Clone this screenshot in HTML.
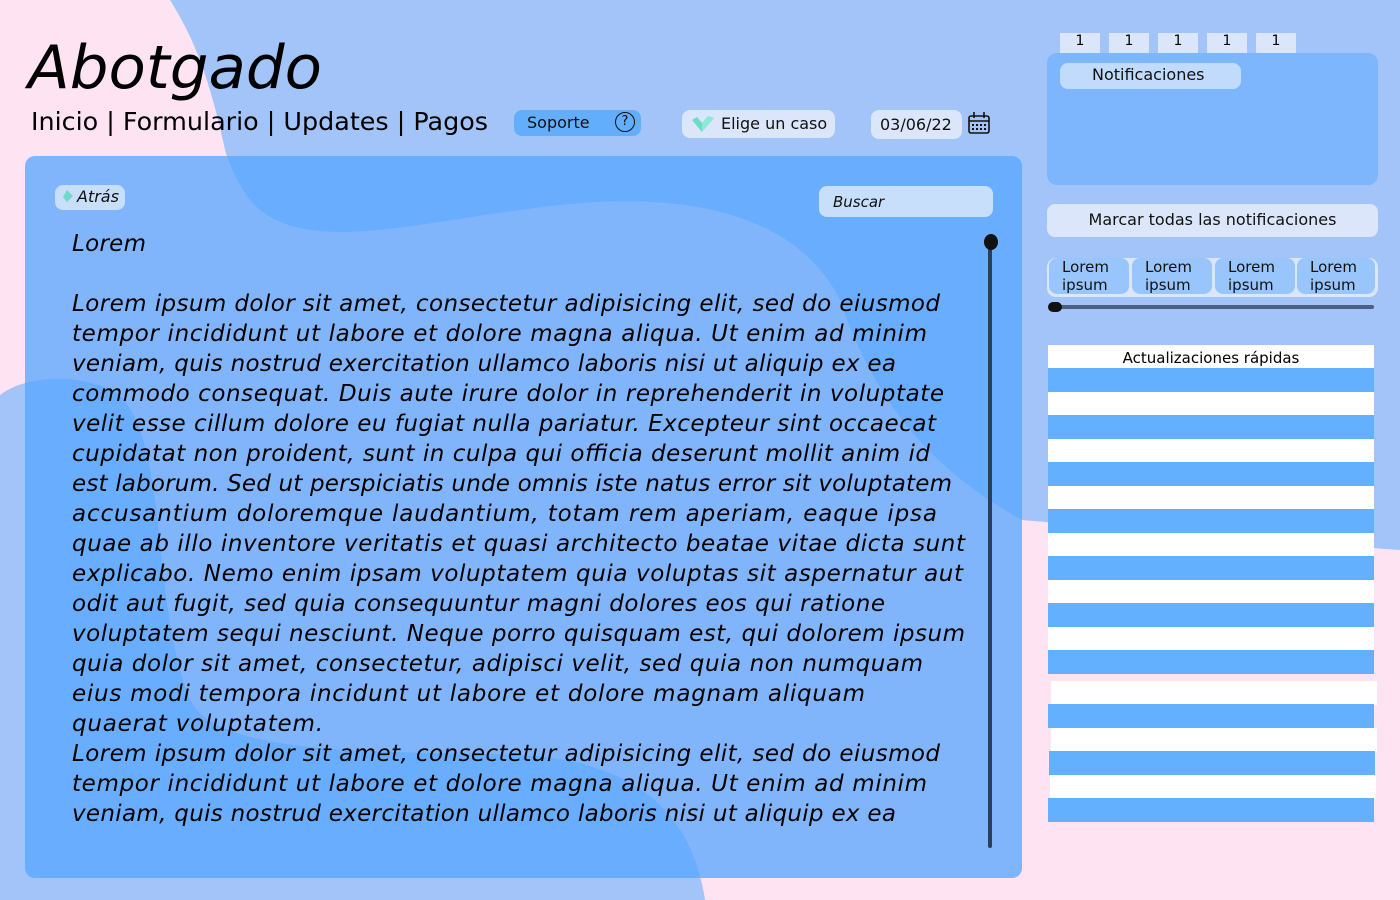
<!DOCTYPE html>
<html><head><meta charset="utf-8"><style>
html,body{margin:0;padding:0;width:1400px;height:900px;overflow:hidden;background:#fee4f2;font-family:"DejaVu Sans","Liberation Sans",sans-serif}
.a{position:absolute}
.pill{position:absolute;border-radius:8px;box-sizing:border-box;color:#111;white-space:nowrap}
.s{position:absolute;left:1048px;width:326px;height:24px}
.w{background:#fff}.b{background:#63b0fe}
</style></head><body>
<svg class="a" style="left:0;top:0" width="1400" height="900">
<path d="M170,0 L1400,0 L1400,550 C1200,535 1080,525 1022,520 C950,480 880,420 840,300 C800,220 700,190 560,205 C420,220 300,260 250,200 C235,180 228,160 225,150 C210,80 195,40 170,0Z" fill="#a2c4f9"/>
<path d="M0,395 C30,372 90,375 120,395 C170,450 150,600 190,700 C220,760 400,750 520,755 C620,760 690,800 705,900 L0,900Z" fill="#a2c4f9"/>
<rect x="25" y="156" width="997" height="722" rx="10" fill="rgb(85,165,255)" fill-opacity="0.75"/>
<g font-family="DejaVu Sans, sans-serif" fill="#000">
<text x="28" y="88" font-size="60" font-style="oblique" font-weight="300" textLength="294" lengthAdjust="spacingAndGlyphs">Abotgado</text>
<text x="31" y="130" font-size="25" textLength="457" lengthAdjust="spacingAndGlyphs">Inicio | Formulario | Updates | Pagos</text>
<g font-size="23" font-style="oblique" lengthAdjust="spacingAndGlyphs">
<text x="72" y="251" textLength="74">Lorem</text>
<text x="72" y="311" textLength="868">Lorem ipsum dolor sit amet, consectetur adipisicing elit, sed do eiusmod</text>
<text x="72" y="341" textLength="855">tempor incididunt ut labore et dolore magna aliqua. Ut enim ad minim</text>
<text x="72" y="371" textLength="824">veniam, quis nostrud exercitation ullamco laboris nisi ut aliquip ex ea</text>
<text x="72" y="401" textLength="872">commodo consequat. Duis aute irure dolor in reprehenderit in voluptate</text>
<text x="72" y="431" textLength="864">velit esse cillum dolore eu fugiat nulla pariatur. Excepteur sint occaecat</text>
<text x="72" y="461" textLength="858">cupidatat non proident, sunt in culpa qui officia deserunt mollit anim id</text>
<text x="72" y="491" textLength="880">est laborum. Sed ut perspiciatis unde omnis iste natus error sit voluptatem</text>
<text x="72" y="521" textLength="865">accusantium doloremque laudantium, totam rem aperiam, eaque ipsa</text>
<text x="72" y="551" textLength="893">quae ab illo inventore veritatis et quasi architecto beatae vitae dicta sunt</text>
<text x="72" y="581" textLength="891">explicabo. Nemo enim ipsam voluptatem quia voluptas sit aspernatur aut</text>
<text x="72" y="611" textLength="813">odit aut fugit, sed quia consequuntur magni dolores eos qui ratione</text>
<text x="72" y="641" textLength="893">voluptatem sequi nesciunt. Neque porro quisquam est, qui dolorem ipsum</text>
<text x="72" y="671" textLength="851">quia dolor sit amet, consectetur, adipisci velit, sed quia non numquam</text>
<text x="72" y="701" textLength="793">eius modi tempora incidunt ut labore et dolore magnam aliquam</text>
<text x="72" y="731" textLength="251">quaerat voluptatem.</text>
<text x="72" y="761" textLength="868">Lorem ipsum dolor sit amet, consectetur adipisicing elit, sed do eiusmod</text>
<text x="72" y="791" textLength="855">tempor incididunt ut labore et dolore magna aliqua. Ut enim ad minim</text>
<text x="72" y="821" textLength="824">veniam, quis nostrud exercitation ullamco laboris nisi ut aliquip ex ea</text>
</g></g>
<line x1="990" y1="244" x2="990" y2="846" stroke="#2c3e5a" stroke-width="4" stroke-linecap="round"/>
<ellipse cx="991" cy="242" rx="7" ry="8" fill="#111"/>
<g stroke="#111" fill="none" stroke-width="1.6"><rect x="969" y="116" width="20" height="17" rx="2"/><line x1="969" y1="121" x2="989" y2="121"/><line x1="974" y1="112" x2="974" y2="118"/><line x1="984" y1="112" x2="984" y2="118"/></g>
<g fill="#111"><rect x="972" y="124" width="2" height="2"/><rect x="976" y="124" width="2" height="2"/><rect x="980" y="124" width="2" height="2"/><rect x="984" y="124" width="2" height="2"/><rect x="972" y="128" width="2" height="2"/><rect x="976" y="128" width="2" height="2"/><rect x="980" y="128" width="2" height="2"/><rect x="984" y="128" width="2" height="2"/></g>
</svg>

<div class="pill" style="left:514px;top:110px;width:127px;height:26px;background:#63aefc;font-size:16px;padding:3px 0 0 13px">Soporte<span class="a" style="left:101px;top:2px;width:18px;height:18px;border:1.5px solid #111;border-radius:50%;font-size:13px;text-align:center;line-height:18px">?</span></div>
<div class="pill" style="left:682px;top:110px;width:153px;height:28px;background:#dbe6fb;font-size:16px;padding:4px 0 0 39px">Elige un caso
<svg class="a" style="left:8px;top:4px" width="26" height="22"><path d="M2,6 L12,18 L24,4 L18,2 L12,9 L7,3 Z" fill="#6bdcc7"/><path d="M12,18 L24,4 L18,2 L12,9Z" fill="#8ee8d6"/></svg></div>
<div class="pill" style="left:871px;top:110px;width:91px;height:29px;background:#dbe6fb;font-size:16px;padding:5px 0 0 9px">03/06/22</div>
<div class="pill" style="left:55px;top:185px;width:70px;height:25px;background:#c8dffc;font-size:16px;font-style:oblique;padding:2px 0 0 22px">Atrás<svg class="a" style="left:6px;top:5px" width="12" height="14"><path d="M6,0 L12,6 L6,12 L2,7Z" fill="#6bdcc7"/></svg></div>
<div class="pill" style="left:819px;top:186px;width:174px;height:31px;background:#c8dffc;font-size:15px;font-style:oblique;padding:7px 0 0 14px">Buscar</div>

<div class="a" style="left:1060px;top:33px;width:40px;height:20px;background:#dbe6fb;font-size:14px;text-align:center">1</div>
<div class="a" style="left:1109px;top:33px;width:40px;height:20px;background:#dbe6fb;font-size:14px;text-align:center">1</div>
<div class="a" style="left:1158px;top:33px;width:40px;height:20px;background:#dbe6fb;font-size:14px;text-align:center">1</div>
<div class="a" style="left:1207px;top:33px;width:40px;height:20px;background:#dbe6fb;font-size:14px;text-align:center">1</div>
<div class="a" style="left:1256px;top:33px;width:40px;height:20px;background:#dbe6fb;font-size:14px;text-align:center">1</div>
<div class="a" style="left:1047px;top:53px;width:331px;height:132px;background:#7db6fd;border-radius:10px"></div>
<div class="pill" style="left:1060px;top:63px;width:181px;height:26px;background:#c1dbfd;font-size:16px;padding:2px 0 0 32px">Notificaciones</div>
<div class="pill" style="left:1047px;top:204px;width:331px;height:33px;background:#dbe6fb;font-size:16px;text-align:center;padding-top:6px">Marcar todas las notificaciones</div>
<div class="a" style="left:1047px;top:258px;width:331px;height:39px;background:#dbe6fb;border-radius:9px"></div>
<div class="pill" style="left:1049px;top:258px;width:80px;height:36px;background:#98c6fc;font-size:15px;line-height:18px;padding-left:13px">Lorem<br>ipsum</div>
<div class="pill" style="left:1132px;top:258px;width:80px;height:36px;background:#98c6fc;font-size:15px;line-height:18px;padding-left:13px">Lorem<br>ipsum</div>
<div class="pill" style="left:1215px;top:258px;width:80px;height:36px;background:#98c6fc;font-size:15px;line-height:18px;padding-left:13px">Lorem<br>ipsum</div>
<div class="pill" style="left:1297px;top:258px;width:78px;height:36px;background:#98c6fc;font-size:15px;line-height:18px;padding-left:13px">Lorem<br>ipsum</div>
<div class="a" style="left:1050px;top:305px;width:324px;height:4px;background:#4d5f80;border-radius:2px"></div>
<div class="a" style="left:1048px;top:302px;width:14px;height:10px;background:#111;border-radius:6px"></div>

<div class="s w" style="top:345px;height:23px;font-size:15px;text-align:center;line-height:26px">Actualizaciones rápidas</div>
<div class="s b" style="top:368px"></div><div class="s w" style="top:392px"></div>
<div class="s b" style="top:415px"></div><div class="s w" style="top:439px"></div>
<div class="s b" style="top:462px"></div><div class="s w" style="top:486px"></div>
<div class="s b" style="top:509px"></div><div class="s w" style="top:533px"></div>
<div class="s b" style="top:556px"></div><div class="s w" style="top:580px"></div>
<div class="s b" style="top:603px"></div><div class="s w" style="top:627px"></div>
<div class="s b" style="top:650px"></div>
<div class="s w" style="top:681px;left:1051px"></div><div class="s b" style="top:704px"></div>
<div class="s w" style="top:728px;left:1051px"></div><div class="s b" style="top:751px;left:1049px"></div>
<div class="s w" style="top:775px;left:1050px"></div><div class="s b" style="top:798px"></div>
</body></html>
